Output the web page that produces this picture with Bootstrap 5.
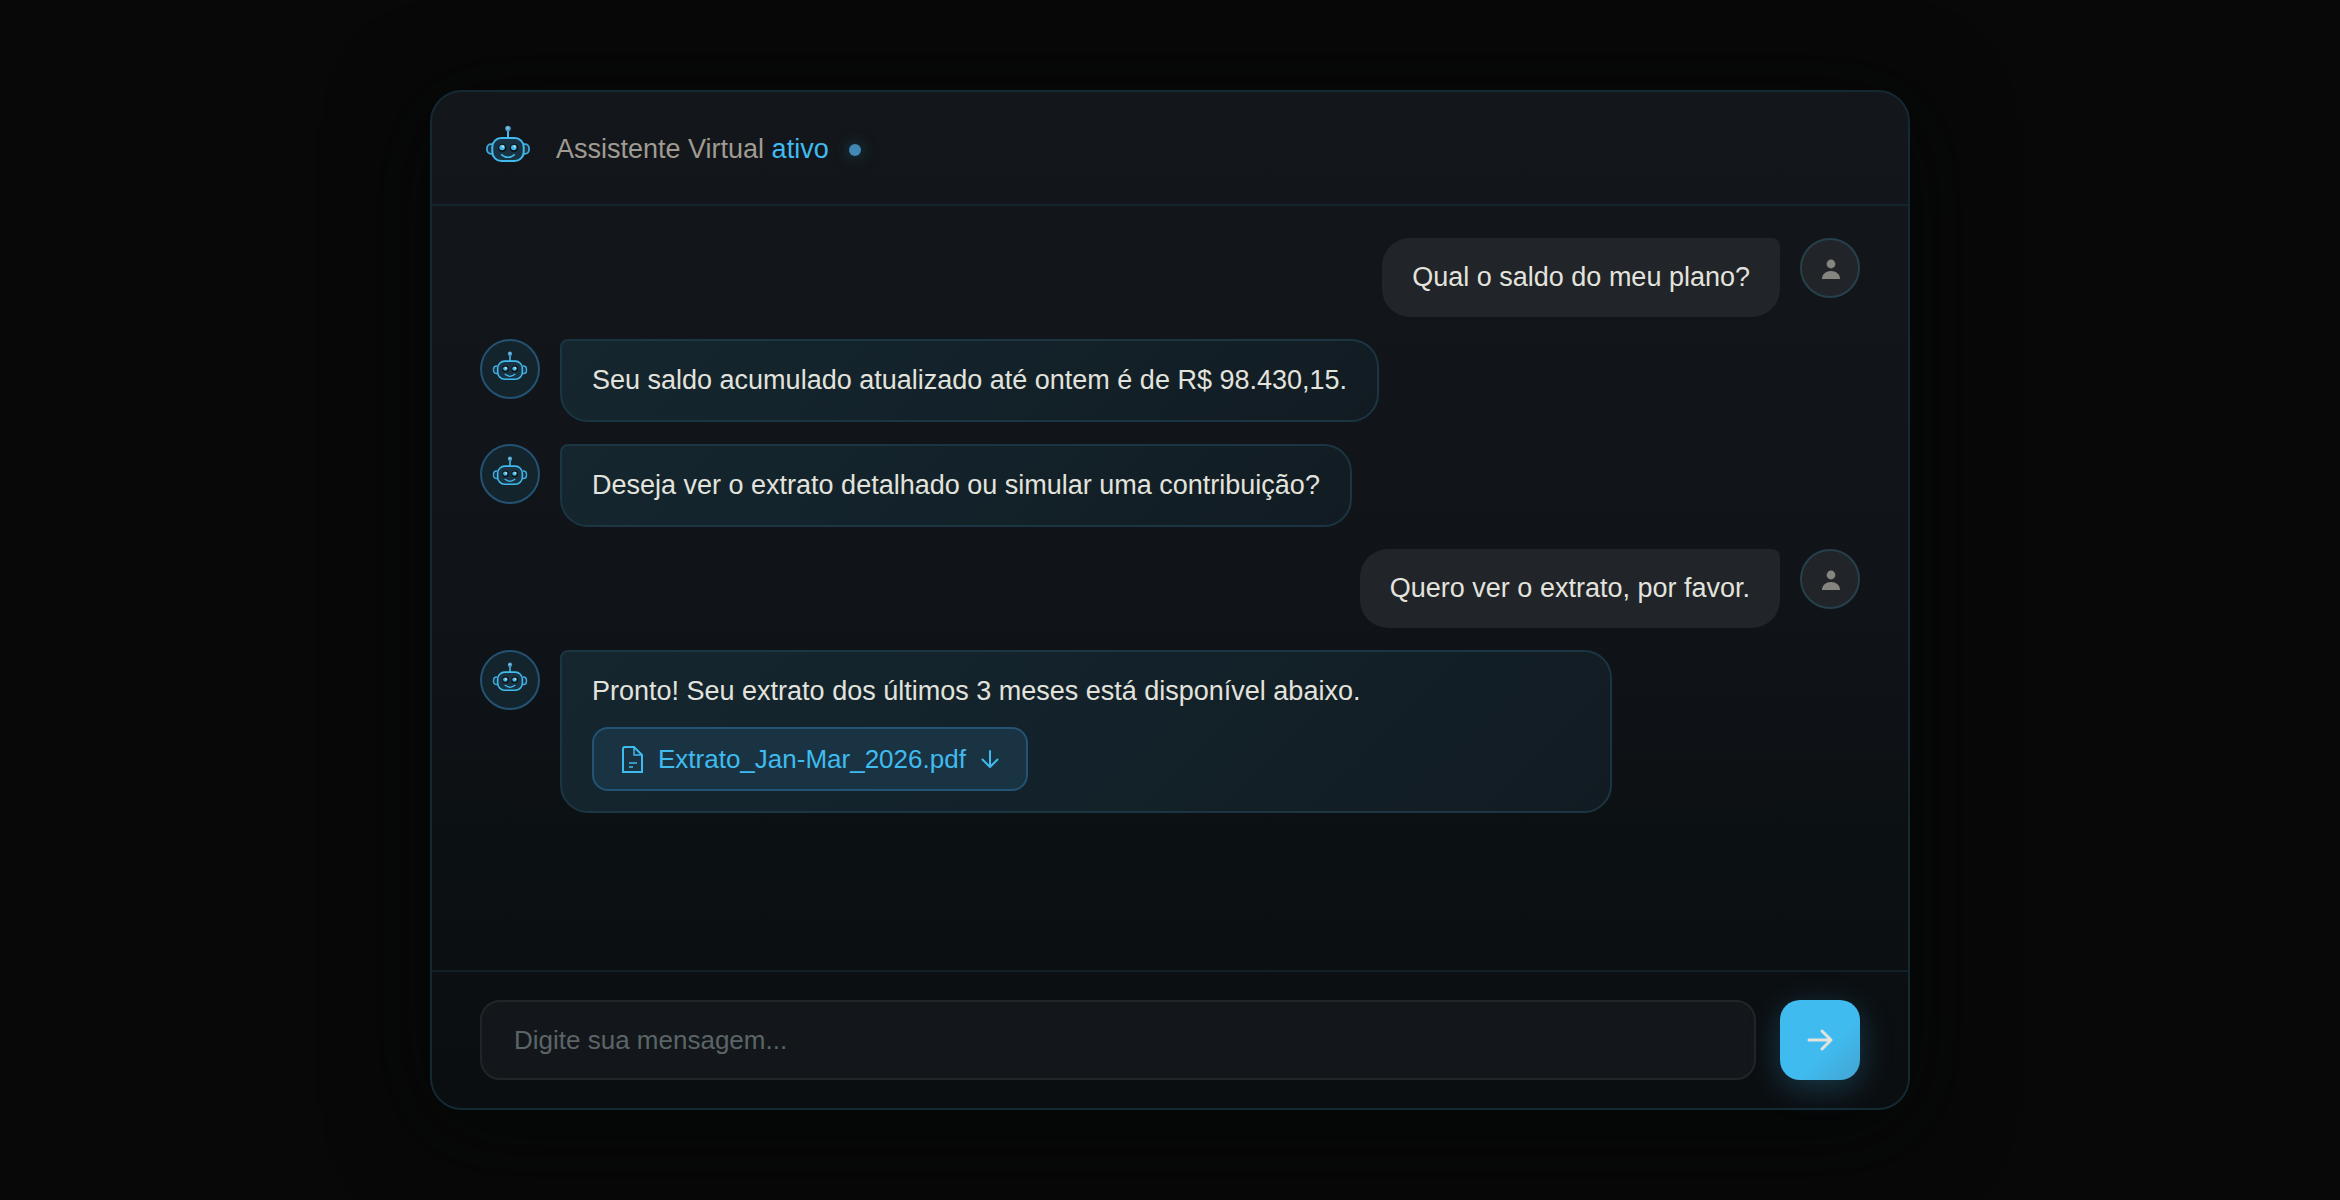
<!DOCTYPE html>
<html lang="pt-BR">
<head>
<meta charset="utf-8">
<meta name="viewport" content="width=device-width, initial-scale=1">
<title>Assistente Virtual</title>
<link href="https://cdn.jsdelivr.net/npm/bootstrap@5.3.0/dist/css/bootstrap.min.css" rel="stylesheet">
<style>
  :root { --sky: #40bbef; --ink: #e3e3dd; }
  body { background: #080808; color: var(--ink); font-family: "Liberation Sans", Arial, sans-serif; font-size: 27px; line-height: 39px; }
  .stage { padding: 90px 0; }
  .chat-panel {
    width: 100%; max-width: 1480px;
    border: 2px solid #152932; border-radius: 32px;
    background: linear-gradient(180deg, #13171b 0%, #101419 50%, #0b1013 75%, #0b0e11 100%);
    box-shadow: 0 16px 96px #040606;
  }
  .chat-top { padding: 28px 48px; gap: 20px; border-bottom: 2px solid #15242c; }
  .chat-title { gap: 20px; padding-top: 3px; color: #a09b92; }
  .chat-title b { color: var(--sky); font-weight: 400; }
  .status-dot { width: 12px; height: 12px; background: #4088b5; box-shadow: 0 0 14px #1b4a5e; }
  .bot-logo { width: 56px; height: 56px; }
  .chat-log { padding: 32px 48px; gap: 22px; }
  .msg { max-width: 82%; gap: 20px; }
  .avatar { width: 60px; height: 60px; border: 2px solid #235272; background: #14242c; }
  .avatar svg { width: 44px; height: 44px; }
  .avatar-user { border-color: #26414c; background: #212429; }
  .avatar-user svg { width: 28px; height: 28px; }
  .bubble { padding: 20px 30px; border-radius: 28px 8px 28px 28px; background: #212429; }
  .bubble-bot { border: 2px solid #1b3543; border-radius: 8px 28px 28px 28px; background: linear-gradient(135deg, #15262f 0%, #13222a 50%, #121b22 100%); }
  .file-chip { height: 64px; margin-top: 16px; padding: 0 24px 0 26px; gap: 12px; border: 2px solid #235474; border-radius: 16px; background: #1a3342; color: var(--sky); font-size: 26px; }
  .file-chip:hover { color: #7fd3f7; }
  .chat-form { padding: 28px 48px; gap: 24px; border-top: 2px solid #131f27; }
  .chat-form .form-control { height: 80px; padding: 0 32px; border: 2px solid #212528; border-radius: 20px; background: #13171b; color: var(--ink); font-size: 26px; }
  .chat-form .form-control::placeholder { color: #5b6567; }
  .send { width: 80px; height: 80px; border-radius: 20px; background: linear-gradient(135deg, #40bbef 60%, #43a4d2 100%); box-shadow: 0 8px 32px #40bbef40; }
</style>
</head>
<body>
<svg class="d-none" aria-hidden="true">
  <symbol id="bot" viewBox="0 0 56 56">
    <path d="M28 11v7" stroke="#40bbef" stroke-width="2"/>
    <circle cx="28" cy="8.6" r="2.8" fill="#4b9cc9"/><circle cx="27.6" cy="8" r="1" fill="#b9d6e2"/>
    <path d="M12 24.2h-1a4 4 0 0 0-4 4v1.6a4 4 0 0 0 4 4h1M44 24.2h1a4 4 0 0 1 4 4v1.6a4 4 0 0 1-4 4h-1" fill="#1a3342" stroke="#40a9dc" stroke-width="1.8"/>
    <rect x="12.3" y="18" width="31.4" height="23" rx="9" fill="#1a3342" stroke="#40bbef" stroke-width="2"/>
    <circle cx="22.3" cy="27.9" r="4.2" fill="#0b1013"/><circle cx="34" cy="27.9" r="4.2" fill="#0b1013"/>
    <circle cx="22.1" cy="27.5" r="2.8" fill="#40bbef"/><circle cx="33.8" cy="27.5" r="2.8" fill="#40bbef"/>
    <circle cx="23" cy="26.6" r="1.1" fill="#e3e3dd"/><circle cx="34.8" cy="26.6" r="1.1" fill="#e3e3dd"/>
    <path d="M21.7 34.8q6.3 5 12.6 0" fill="none" stroke="#40bbef" stroke-width="1.6" stroke-linecap="round"/>
  </symbol>
  <symbol id="person" viewBox="0 0 28 28">
    <circle cx="15" cy="10" r="4.4" fill="#84857f"/>
    <path d="M6 25c0-5 4-8 9-8s9 3 9 8z" fill="#84857f"/>
  </symbol>
</svg>

<main class="stage d-flex justify-content-center min-vh-100">
  <section class="chat-panel d-flex flex-column">
    <header class="chat-top d-flex align-items-center">
      <svg class="bot-logo flex-shrink-0" aria-hidden="true"><use href="#bot"/></svg>
      <div class="chat-title d-flex align-items-center">
        <span>Assistente Virtual <b>ativo</b></span>
        <span class="status-dot rounded-circle"></span>
      </div>
    </header>

    <div class="chat-log d-flex flex-column flex-grow-1">
      <div class="msg d-flex align-items-start align-self-end">
        <div class="bubble">Qual o saldo do meu plano?</div>
        <div class="avatar avatar-user rounded-circle d-flex align-items-center justify-content-center flex-shrink-0"><svg aria-hidden="true"><use href="#person"/></svg></div>
      </div>
      <div class="msg d-flex align-items-start align-self-start">
        <div class="avatar rounded-circle d-flex align-items-center justify-content-center flex-shrink-0"><svg aria-hidden="true"><use href="#bot"/></svg></div>
        <div class="bubble bubble-bot">Seu saldo acumulado atualizado até ontem é de R$ 98.430,15.</div>
      </div>
      <div class="msg d-flex align-items-start align-self-start">
        <div class="avatar rounded-circle d-flex align-items-center justify-content-center flex-shrink-0"><svg aria-hidden="true"><use href="#bot"/></svg></div>
        <div class="bubble bubble-bot">Deseja ver o extrato detalhado ou simular uma contribuição?</div>
      </div>
      <div class="msg d-flex align-items-start align-self-end">
        <div class="bubble">Quero ver o extrato, por favor.</div>
        <div class="avatar avatar-user rounded-circle d-flex align-items-center justify-content-center flex-shrink-0"><svg aria-hidden="true"><use href="#person"/></svg></div>
      </div>
      <div class="msg w-100 d-flex align-items-start align-self-start">
        <div class="avatar rounded-circle d-flex align-items-center justify-content-center flex-shrink-0"><svg aria-hidden="true"><use href="#bot"/></svg></div>
        <div class="bubble bubble-bot flex-grow-1">
          <div>Pronto! Seu extrato dos últimos 3 meses está disponível abaixo.</div>
          <div class="d-flex">
            <a class="file-chip d-inline-flex align-items-center text-decoration-none" href="#extrato">
              <svg width="26" height="32" viewBox="0 0 26 32" fill="none" stroke="currentColor" stroke-width="2" aria-hidden="true">
                <path d="M5 4h9l8 8v17H3V6a2 2 0 0 1 2-2z"/><path d="M14 4v8h8M9 20h8M9 24h4" stroke-width="1.5"/>
              </svg>
              <span>Extrato_Jan-Mar_2026.pdf</span>
              <svg width="24" height="24" viewBox="0 0 24 24" fill="none" stroke="currentColor" stroke-width="2" stroke-linecap="round" stroke-linejoin="round" aria-hidden="true"><path d="M12 4v16M4.500 12.500l7.500 7.500 7.500-7.500"/></svg>
            </a>
          </div>
        </div>
      </div>
    </div>

    <form class="chat-form d-flex">
      <input class="form-control flex-grow-1" type="text" placeholder="Digite sua mensagem..." aria-label="Digite sua mensagem">
      <button class="send btn border-0 p-0 d-flex align-items-center justify-content-center flex-shrink-0" type="submit" aria-label="Enviar">
        <svg width="32" height="32" viewBox="0 0 32 32" fill="none" stroke="#e3e3dd" stroke-width="3" stroke-linecap="round" stroke-linejoin="round" aria-hidden="true"><path d="M5 16h22M18 7l9 9-9 9"/></svg>
      </button>
    </form>
  </section>
</main>
<script src="https://cdn.jsdelivr.net/npm/bootstrap@5.3.0/dist/js/bootstrap.bundle.min.js"></script>
</body>
</html>
